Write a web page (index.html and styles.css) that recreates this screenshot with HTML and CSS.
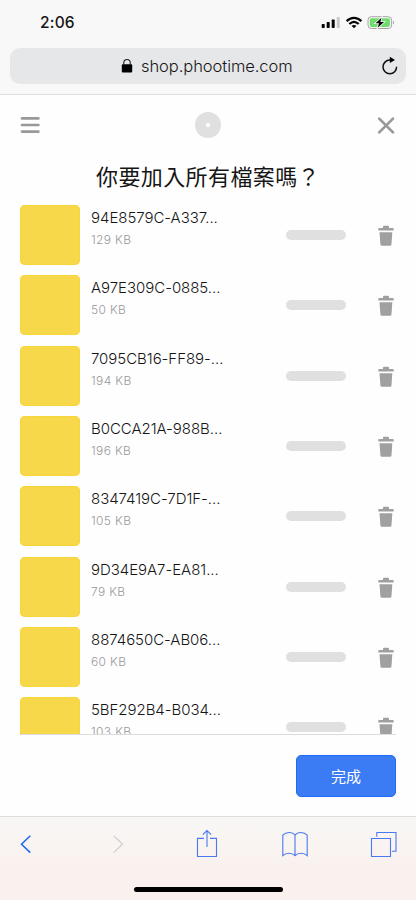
FILE: index.html
```
<!DOCTYPE html>
<html lang="zh-Hant">
<head>
<meta charset="utf-8">
<title>shop.phootime.com</title>
<link rel="stylesheet" href="styles.css">
</head>
<body>
<header class="browser">
  <div class="status">
    <span class="time">2:06</span>
    <svg class="indicators" width="76" height="16" viewBox="0 0 76 16">
      <g fill="#050505"><rect x="1.7" y="9" width="3" height="4" rx=".7"/><rect x="6.7" y="7" width="3" height="6" rx=".7"/><rect x="11.7" y="4.5" width="3" height="8.5" rx=".7"/></g>
      <rect x="16.8" y="2" width="3" height="11" rx=".7" fill="#c9c9c9"/>
      <g fill="none" stroke="#050505" stroke-width="2.2"><path d="M26.6 6.1C31 1.8 37 1.8 41.4 6.1M29.3 9C32.2 6.3 35.8 6.3 38.7 9"/></g>
      <path d="M31.5 10.8Q34 9 36.5 10.8L34 13.2Z" fill="#050505"/>
      <rect x="48" y="1.7" width="23.6" height="11.8" rx="3.4" fill="none" stroke="#a5a5a5"/>
      <rect x="49.7" y="3.3" width="20.2" height="8.6" rx="1.8" fill="#70dc70"/>
      <path d="M73 5.5Q75 7.5 73 9.6Z" fill="#999"/>
      <path d="M61.5 2.8L55.5 8.3H59L57.7 12.8L64 7H60.4Z" fill="#050505" stroke="#f8f8f8" stroke-width="1.6" paint-order="stroke"/>
    </svg>
  </div>
  <div class="address">
    <svg class="lock" width="12" height="16" viewBox="0 0 12 16"><rect x=".8" y="6.3" width="10.4" height="8.2" rx="1" fill="#000"/><path d="M2.8 7V4.6C2.8.5 9.2.5 9.2 4.6V7" fill="none" stroke="#222" stroke-width="1.1"/></svg>
    <span class="domain">shop.phootime.com</span>
    <svg class="reload" width="18" height="20" viewBox="0 0 18 20"><path d="M10 4.1H8.8A6.8 6.8 0 1 0 15.6 10.8" fill="none" stroke="#111" stroke-width="1.5"/><path d="M8.8.8L14 4L8.8 7Z" fill="#000"/></svg>
  </div>
</header>
<main class="page">
  <nav class="app-bar">
    <svg width="20" height="20" viewBox="0 0 20 20" stroke="#999" stroke-width="2.7" stroke-linecap="round"><path d="M2 3.4H18.4M2 10H18.4M2 16.6H18.4"/></svg>
    <span class="brand"></span>
    <svg width="20" height="20" viewBox="0 0 20 20" stroke="#999" stroke-width="2.7" stroke-linecap="round"><path d="M3.2 3.6L17 17.4M17 3.6L3.2 17.4"/></svg>
  </nav>
  <h1 class="title">你要加入所有檔案嗎？</h1>
  <ul class="files" id="files"></ul>
  <div class="actions"><button class="done">完成</button></div>
</main>
<footer class="toolbar">
  <div class="tools">
    <svg width="12" height="20" viewBox="0 0 12 20" fill="none" stroke="#1c66f5" stroke-width="1.5"><path d="M10.3 1.8L1.5 10.2L10.3 18.6"/></svg>
    <svg width="12" height="20" viewBox="0 0 12 20" fill="none" stroke="#d2d0d0" stroke-width="1.3"><path d="M1.7 1.8L10.5 10.2L1.7 18.6"/></svg>
    <svg class="share" width="22" height="30" viewBox="0 0 22 30" fill="none" stroke="#4a79ef" stroke-width="1.1"><path d="M8 10.4H1.5V28.5H20.5V10.4H14M11 19V2.5M6.8 6.7L11 2.5L15.2 6.7"/></svg>
    <svg width="28" height="28" viewBox="0 0 28 28" fill="none" stroke="#4a79ef" stroke-width="1.1"><path d="M14 5.2C11.5 1.6 5 1.6 1.8 5.2V25.7C5 22.4 11 22.4 14 25.7C17 22.4 23 22.4 26.2 25.7V5.2C23 1.6 16.5 1.6 14 5.2V25.7"/></svg>
    <svg class="tabs" width="28" height="28" viewBox="0 0 28 28" fill="none" stroke="#4a79ef" stroke-width="1.1"><path d="M2.5 8.5H21.5V26.5H2.5ZM7.8 6.8V2.5H27V21.2H23"/></svg>
  </div>
  <div class="home"></div>
</footer>
<script src="files.js"></script>
</body>
</html>
```
FILE: styles.css
```
* { box-sizing: border-box; }
body { margin: 0; height: 900px; overflow: hidden; display: flex; flex-direction: column; background: #fefefe; color: #161616; font-family: Inter, "Noto Sans CJK TC", sans-serif; }
.browser { height: 95px; flex: none; background: #f8f8f8; border-bottom: 1px solid #dedede; padding: 0 10px; }
.status { height: 48px; padding: 0 10px 0 30px; display: flex; justify-content: space-between; align-items: flex-start; }
.time { font-size: 15.5px; line-height: 20px; margin-top: 13px; font-weight: 500; letter-spacing: .2px; }
.indicators { margin-top: 15px; }
.address { height: 36px; border-radius: 10px; background: #e6e7e9; display: flex; align-items: center; padding: 0 7px 0 111px; }
.domain { margin-left: 8px; font-size: 16.5px; line-height: 24px; font-weight: 350; letter-spacing: -.06px; white-space: nowrap; }
.reload { margin-left: auto; }
.page { height: 721px; flex: none; padding: 0 20px; display: flex; flex-direction: column; }
.app-bar { height: 60px; flex: none; display: flex; justify-content: space-between; align-items: center; }
.brand { width: 26px; height: 26px; border-radius: 50%; background: radial-gradient(circle, #fff 0 1.8px, #e0e0e0 2.4px); }
.title { margin: 7px 0 0; height: 43px; flex: none; text-align: center; font-size: 22px; line-height: 30px; font-weight: 400; letter-spacing: .4px; white-space: nowrap; }
.files { list-style: none; margin: 0; padding: 0; height: 530px; flex: none; overflow: hidden; border-bottom: 1px solid #dcdcdc; }
.file { height: 60px; margin-bottom: 10.33px; display: flex; }
.thumb { width: 60px; height: 60px; border-radius: 5px; background: #f7d84b; box-shadow: inset 0 0 0 1px #f9d638; }
.info { width: 194.5px; margin-left: 11px; }
.name { margin-top: 3px; font-size: 15px; line-height: 20px; font-weight: 300; letter-spacing: -.04px; white-space: nowrap; }
.size { margin-top: 3px; font-size: 12px; line-height: 18px; font-weight: 300; color: #999; letter-spacing: .35px; }
.progress { width: 60.5px; height: 10px; margin-top: 25px; border-radius: 5px; background: #e0e0e0; }
.trash { margin-left: auto; margin-top: 20px; margin-right: 2px; }
.actions { flex: 1; display: flex; justify-content: flex-end; align-items: flex-start; padding-top: 20px; }
.done { width: 100px; height: 42px; padding: 0 0 2px; border: 1px solid #1d6cf4; border-radius: 5px; color: #fff; background: #3b7bf3; font: 400 15px "Noto Sans CJK TC", sans-serif; }
.toolbar { height: 84px; flex: none; border-top: 1px solid #dddcdc; background: linear-gradient(#f8f7f6, #faf1ee 60%, #faf0ed); display: flex; flex-direction: column; align-items: center; }
.tools { width: 100%; height: 54px; padding-left: 20px; display: grid; grid-template-columns: 92px 84px 85px 88px 28px; align-items: center; }
.share { margin-bottom: 3px; }
.tabs { margin-bottom: 1px; }
.home { width: 149px; height: 5px; border-radius: 3px; background: #000; margin-top: 16px; }
```
FILE: files.js
```
const files = [
  ["94E8579C-A337...", "129 KB"], ["A97E309C-0885...", "50 KB"],
  ["7095CB16-FF89-...", "194 KB"], ["B0CCA21A-988B...", "196 KB"],
  ["8347419C-7D1F-...", "105 KB"], ["9D34E9A7-EA81...", "79 KB"],
  ["8874650C-AB06...", "60 KB"], ["5BF292B4-B034...", "103 KB"]
];
document.getElementById("files").innerHTML = files.map(([name, size]) => `
  <li class="file"><div class="thumb"></div>
    <div class="info"><div class="name">${name}</div><div class="size">${size}</div></div>
    <div class="progress"></div>
    <svg class="trash" width="16" height="22" viewBox="0 0 16 22" fill="#a0a0a0"><path d="M1 3H5V1.6Q5 .8 6 .8H10Q11 .8 11 1.6V3H15Q15.7 3 15.7 3.7V5.4H.3V3.7Q.3 3 1 3ZM1.5 7.2H14.3L13.5 19.2Q13.4 20.8 12 20.8H3.8Q2.5 20.8 2.4 19.2Z"/></svg>
  </li>`).join("");
```
